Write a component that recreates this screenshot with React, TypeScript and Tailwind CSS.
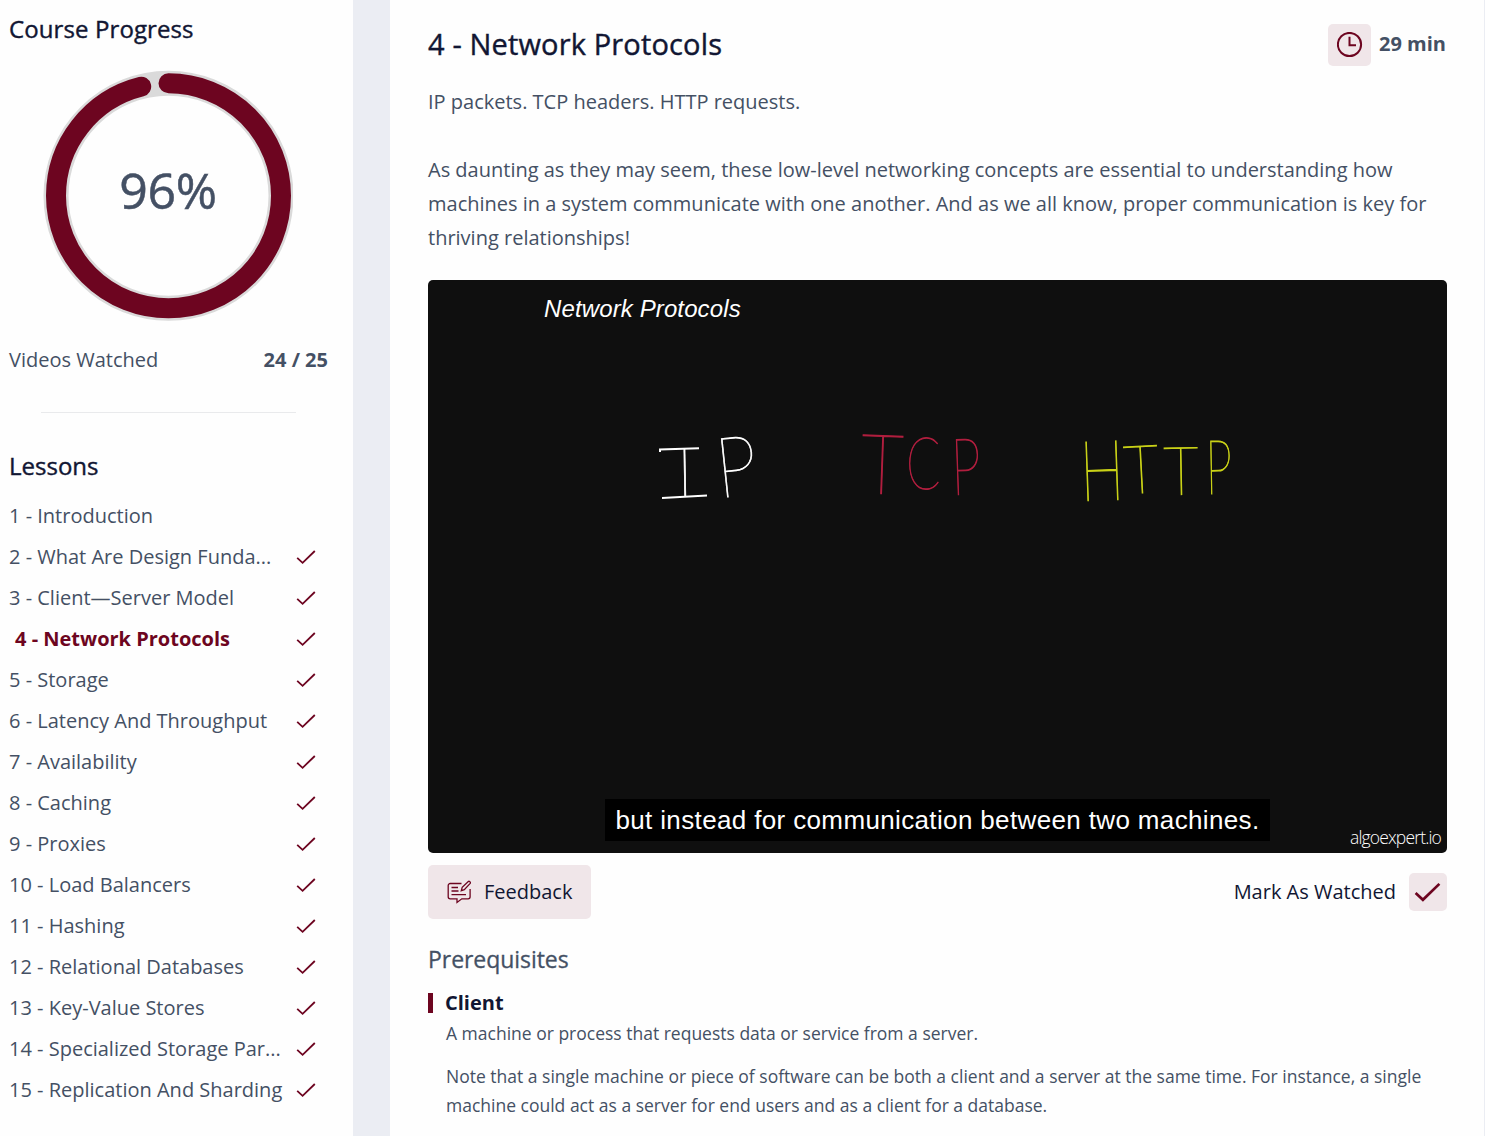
import React from "react";

const lessons = [
  "1 - Introduction",
  "2 - What Are Design Funda...",
  "3 - Client—Server Model",
  "4 - Network Protocols",
  "5 - Storage",
  "6 - Latency And Throughput",
  "7 - Availability",
  "8 - Caching",
  "9 - Proxies",
  "10 - Load Balancers",
  "11 - Hashing",
  "12 - Relational Databases",
  "13 - Key-Value Stores",
  "14 - Specialized Storage Par...",
  "15 - Replication And Sharding",
];

const ACTIVE = 3;

function Check({ className, strokeWidth }: { className: string; strokeWidth: number }) {
  return (
    <svg className={className} viewBox="0 0 20 16" fill="none" stroke="#6d0520" strokeWidth={strokeWidth}>
      <path d="M1.2 8.8 L6.6 13.8 L18.8 2" />
    </svg>
  );
}

function ProgressRing() {
  const r = 112.5;
  const circumference = 2 * Math.PI * r;
  return (
    <div className="relative mt-[24px] ml-[34px] h-[252px] w-[250px]">
      <svg className="block h-[252px] w-[250px]" viewBox="0 0 250 252" fill="none">
        <circle cx="125.5" cy="126.8" r={r} stroke="#dadada" strokeWidth="25" />
        <circle
          cx="125.5"
          cy="126.8"
          r={r}
          stroke="#6d0520"
          strokeWidth="20"
          strokeLinecap="round"
          strokeDasharray={`${circumference * 0.96} ${circumference}`}
          transform="rotate(-90 125.5 126.8)"
        />
      </svg>
      <div className="absolute inset-0 flex items-center justify-center pb-[10px] text-[50px] tracking-[-0.4px] [-webkit-text-stroke:0.5px_#445064]">96%</div>
    </div>
  );
}

function Sidebar() {
  return (
    <aside className="flex w-[353px] shrink-0 flex-col bg-[#fefefe] pl-[9px]">
      <h2 className="mt-[13px] h-8 text-[24px] leading-8 tracking-[0.1px] text-[#111633] [-webkit-text-stroke:0.4px_#111633]">Course Progress</h2>
      <ProgressRing />
      <div className="mt-[22px] flex h-[34px] items-center justify-between pr-[25px] text-[20px]">
        <span>Videos Watched</span>
        <span className="font-bold">24 / 25</span>
      </div>
      <div className="mt-[35px] ml-[32px] h-px w-[255px] bg-[#e9eaec]" />
      <h2 className="mt-[37px] h-8 text-[24px] leading-8 text-[#111633] [-webkit-text-stroke:0.4px_#111633]">Lessons</h2>
      <ul className="mt-[13px]">
        {lessons.map((name, i) => (
          <li key={name} className="flex h-[41px] items-center justify-between pr-[37px] text-[20px] whitespace-nowrap">
            <span className={i === ACTIVE ? "pl-[6px] font-bold text-[#6d0520]" : ""}>{name}</span>
            {i > 0 && <Check className="h-4 w-5 shrink-0" strokeWidth={1.8} />}
          </li>
        ))}
      </ul>
    </aside>
  );
}

function Video() {
  return (
    <div className="relative mt-[25px] h-[573px] w-[1019px] overflow-hidden rounded-[5px] bg-[#0f0f0f] text-white">
      <div className="pt-[14px] pl-[116px] font-['Liberation_Sans'] text-[24px] leading-[30px] tracking-[0.12px] italic">Network Protocols</div>
      <svg className="absolute top-0 left-0 h-[573px] w-[1019px]" viewBox="428 280 1019 573" fontFamily="Lato, sans-serif" fontWeight="100" fontSize="84">
        <g fill="#ffffff" stroke="#ffffff" strokeWidth="0.8">
          <text transform="translate(675 496) rotate(-1) scale(1 .8)">I</text>
          <path d="M660 452v-2.5l39-1.2M662 498l45-2.5" fill="none" strokeWidth="2" />
          <text transform="translate(719 498) rotate(-6) scale(.87 1)">P</text>
        </g>
        <g fill="#b01e3e" stroke="#b01e3e" strokeWidth="1.1">
          <text transform="translate(860 493) rotate(2) scale(.88 .99)">T</text>
          <text transform="translate(906 489) scale(.6 .85)">C</text>
          <text transform="translate(952 495) rotate(-2) scale(.63 .94)">P</text>
        </g>
        <g fill="#c9d117" stroke="#c9d117" strokeWidth="1.1">
          <text transform="translate(1081 501) rotate(-2) scale(.7 1)">H</text>
          <text transform="translate(1125 494) rotate(-3) scale(.73 .8)">T</text>
          <text transform="translate(1164 495) rotate(-1) scale(.73 .8)">T</text>
          <text transform="translate(1206 494) rotate(-1) scale(.56 .9)">P</text>
        </g>
      </svg>
      <div className="absolute top-[519px] left-[177px] flex h-[42px] w-[665px] items-center justify-center bg-black font-['Liberation_Sans'] text-[26px] tracking-[0.36px] whitespace-nowrap">
        but instead for communication between two machines.
      </div>
      <div className="absolute right-[6px] bottom-[4px] font-['Open_Sans'] text-[17.5px] leading-6 font-light tracking-[-0.85px]">algoexpert.io</div>
    </div>
  );
}

export default function App() {
  return (
    <div className="flex h-[1136px] w-[1485px] overflow-hidden bg-[#ebedf3] font-['Open_Sans',sans-serif] text-[#445064]">
      <Sidebar />
      <main className="ml-[37px] flex w-[1095px] flex-col border-r border-[#ebedf3] bg-[#fefefe] pl-[38px]">
        <header className="mt-[23px] flex h-[43px] items-center justify-between pr-[38px]">
          <h1 className="pb-[2px] text-[29px] tracking-[0.15px] text-[#111633] [-webkit-text-stroke:0.4px_#111633]">4 - Network Protocols</h1>
          <div className="flex items-center gap-[8px]">
            <div className="flex h-[42px] w-[43px] items-center justify-center rounded-[5px] bg-[#f0e6e9]">
              <svg className="size-[26px]" viewBox="0 0 26 26" fill="none" stroke="#6d0520" strokeWidth="2">
                <circle cx="12.5" cy="12.5" r="11.6" />
                <path d="M12.5 4.7v8.6H19" />
              </svg>
            </div>
            <span className="pb-[2px] text-[20px] font-bold">29 min</span>
          </div>
        </header>
        <div className="mt-[19px] text-[20px] leading-[34px] whitespace-nowrap">
          <p>IP packets. TCP headers. HTTP requests.</p>
          <p className="mt-[34px]">
            As daunting as they may seem, these low-level networking concepts are essential to understanding how
            <br />
            machines in a system communicate with one another. And as we all know, proper communication is key for
            <br />
            thriving relationships!
          </p>
        </div>
        <Video />
        <div className="mt-[12px] flex h-[54px] items-center justify-between pr-[37px] text-[20px] text-[#111633]">
          <button className="flex h-[54px] w-[163px] items-center gap-[13px] rounded-[5px] bg-[#f0e6e9] pl-[19px]">
            <svg className="h-6 w-6" viewBox="0 0 24 24" fill="none" stroke="#6d0520" strokeWidth="1.3">
              <path d="M14.5 3.5H3.2a2 2 0 0 0-2 2v11.3a2 2 0 0 0 2 2H10v3.6l4.8-3.6h6.3a2 2 0 0 0 2-2V9" />
              <path d="M4.5 7.5h6.5M4.5 11h7M4.5 14.7h14.5" />
              <path d="m14.3 10.7.9-3.3 6.1-5.9a1 1 0 0 1 1.3 0l.6.6a1 1 0 0 1 0 1.3l-5.9 6.2z" />
            </svg>
            Feedback
          </button>
          <div className="flex items-center gap-[13px]">
            <span>Mark As Watched</span>
            <div className="flex size-[38px] items-center justify-center rounded-[5px] bg-[#f0e6e9] pr-[2px]">
              <Check className="h-[22px] w-[27px]" strokeWidth={2} />
            </div>
          </div>
        </div>
        <h2 className="mt-[24px] h-8 text-[23px] leading-8 tracking-[-0.05px] [-webkit-text-stroke:0.3px_#445064]">Prerequisites</h2>
        <div className="mt-[11px] flex h-[34px] items-center gap-[12px] text-[20px] font-bold text-[#111633]">
          <span className="h-5 w-[5px] bg-[#6d0520]" />
          Client
        </div>
        <div className="-mt-px pl-[18px] text-[17.5px] leading-[29px] whitespace-nowrap">
          <p>A machine or process that requests data or service from a server.</p>
          <p className="mt-[14px]">
            Note that a single machine or piece of software can be both a client and a server at the same time. For instance, a single
            <br />
            machine could act as a server for end users and as a client for a database.
          </p>
        </div>
      </main>
    </div>
  );
}
